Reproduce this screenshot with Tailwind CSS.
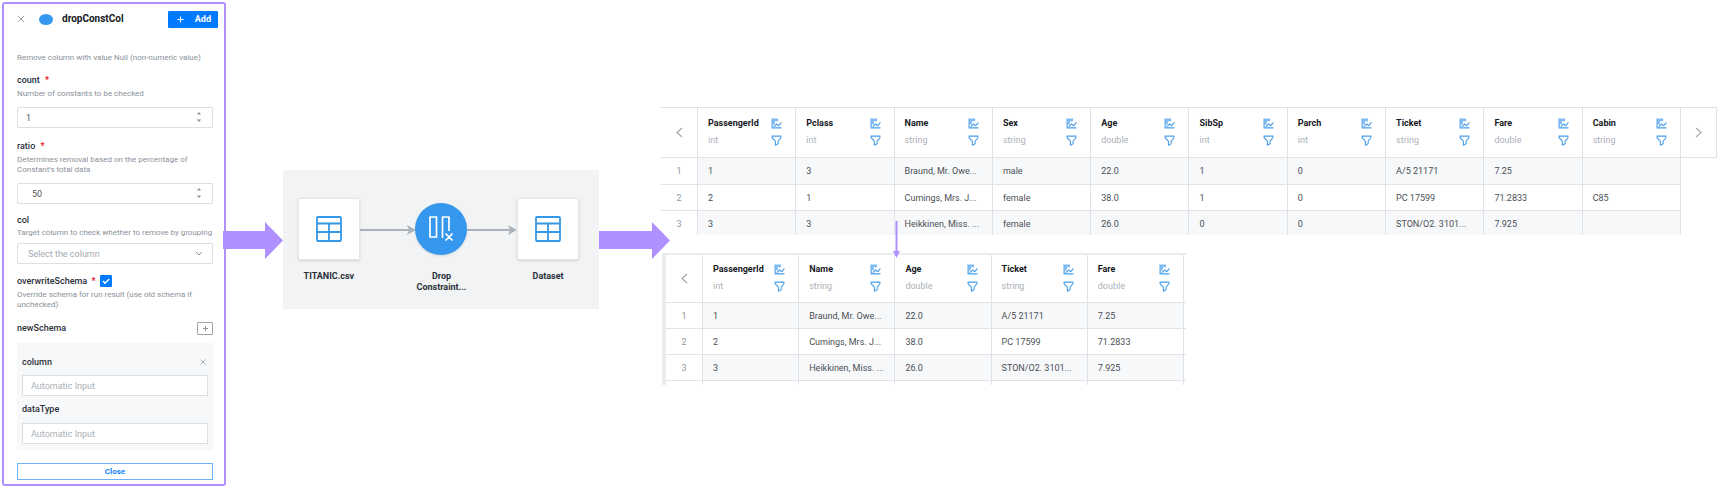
<!DOCTYPE html>
<html lang="en">
<head>
<meta charset="utf-8">
<title>dropConstCol</title>
<script src="https://cdn.jsdelivr.net/npm/@tailwindcss/browser@4"></script>
</head>
<body class="bg-white font-['Roboto',sans-serif] text-[#2b3038]">
<svg class="hidden" aria-hidden="true">
  <symbol id="chart" viewBox="0 0 20 20"><path d="M2 1v17h17" fill="none" stroke="currentColor" stroke-width="2"/><path d="M3 1h4v11H3zM7 1h6v5H7z" fill="currentColor" opacity=".7"/><path d="M5 16l5-5 4 3 5-6" fill="none" stroke="currentColor" stroke-width="2"/></symbol>
  <symbol id="filter" viewBox="0 0 20 20"><path d="M2 2h16v3l-5 6v5l-5 2.500v-7.500l-6-6z" fill="none" stroke="currentColor" stroke-width="2" stroke-linejoin="round"/></symbol>
  <symbol id="sheet" viewBox="0 0 26 26"><path d="M2 1h22q1 0 1 1v22q0 1-1 1H2q-1 0-1-1V2q0-1 1-1zM1 7.500h24M1 16h24M13 7.500V25" fill="none" stroke="currentColor" stroke-width="1.800"/></symbol>
  <symbol id="cross" viewBox="0 0 10 10"><path d="M1 1l8 8M9 1l-8 8" fill="none" stroke="currentColor" stroke-width="1.200"/></symbol>
  <symbol id="spin" viewBox="0 0 6 12"><path d="M.8 3.500L3 1l2.200 2.500zM.8 8.500L3 11l2.200-2.500z" fill="currentColor"/></symbol>
</svg>
<main class="flex items-start">
  <aside class="mt-[2px] ml-[2px] w-56 shrink-0 rounded-[3px] border-2 border-[#b08fff] pr-[11px] pb-1 pl-[13px] text-[8px] leading-[10px] text-[#8a929b]">
    <header class="-mr-[5px] flex h-[30px] items-center">
      <button aria-label="Dismiss" class="mr-[14px] text-[#9aa0a6]"><svg class="size-2"><use href="#cross"/></svg></button>
      <span class="h-[11px] w-[14px] rounded-[50%] bg-[#3598ee]"></span>
      <h1 class="ml-[9px] text-[10px] font-bold text-[#16191d]">dropConstCol</h1>
      <button class="ml-auto flex h-[17px] w-[50px] items-center justify-between rounded-[1px] bg-[#007bff] px-[7px] text-[9px] font-bold text-white"><svg class="ml-[2px] size-[7px]" viewBox="0 0 7 7"><path d="M3.500 0.500v6M.5 3.500h6" stroke="white"/></svg>Add</button>
    </header>
    <p class="mt-[19px]">Remove column with value Null (non-numeric value)</p>
    <label for="count" class="mt-[11px] block text-[9px] leading-3 font-medium text-[#2b3038]">count <span class="ml-[3px] text-red-600">*</span></label>
    <p class="mt-[3px]">Number of constants to be checked</p>
    <div class="relative mt-[8px]">
      <input id="count" type="number" value="1" class="block h-[21px] w-full rounded-[1px] border border-[#dcdfe3] px-2 text-[9px] text-[#50565d] [appearance:textfield]">
      <svg class="pointer-events-none absolute top-1 right-[11px] h-3 w-[6px]"><use href="#spin"/></svg>
    </div>
    <label for="ratio" class="mt-[12px] block text-[9px] leading-3 font-medium text-[#2b3038]">ratio <span class="ml-[3px] text-red-600">*</span></label>
    <p class="mt-[3px]">Determines removal based on the percentage of<br>Constant's total data</p>
    <div class="relative mt-[8px]">
      <input id="ratio" type="number" value="50" class="block h-[21px] w-full rounded-[1px] border border-[#dcdfe3] px-[14px] text-[9px] text-[#50565d] [appearance:textfield]">
      <svg class="pointer-events-none absolute top-1 right-[11px] h-3 w-[6px]"><use href="#spin"/></svg>
    </div>
    <label for="col" class="mt-[10px] block text-[9px] leading-3 font-medium text-[#2b3038]">col</label>
    <p class="mt-[2px] whitespace-nowrap">Target column to check whether to remove by grouping</p>
    <div class="relative mt-[5px]">
      <select id="col" class="block h-[21px] w-full appearance-none rounded-[1px] border border-[#dcdfe3] px-[10px] text-[9px] text-[#a4abb3]"><option>Select the column</option></select>
      <svg class="pointer-events-none absolute top-2 right-[10px] h-[5px] w-2" viewBox="0 0 8 5"><path d="M1 1l3 3 3-3" fill="none" stroke="currentColor"/></svg>
    </div>
    <div class="mt-[11px] flex h-3 items-center">
      <label for="over" class="text-[9px] font-medium text-[#2b3038]">overwriteSchema <span class="ml-[2px] text-red-600">*</span></label>
      <span class="relative ml-[5px] size-3"><input id="over" type="checkbox" checked class="block size-3 appearance-none rounded-[1px] bg-[#007bff]"><svg class="pointer-events-none absolute inset-0 size-3" viewBox="0 0 12 12"><path d="M3 6l2 2.200L9.200 4" fill="none" stroke="white" stroke-width="1.500"/></svg></span>
    </div>
    <p class="mt-[3px]">Override schema for run result (use old schema if<br>unchecked)</p>
    <div class="mt-[11px] flex h-[14px] items-center justify-between">
      <h2 class="text-[9px] font-medium text-[#2b3038]">newSchema</h2>
      <button aria-label="Add schema" class="flex h-[13px] w-4 items-center justify-center rounded-[1px] border border-[#a0a4a9]"><svg class="size-[5px]" viewBox="0 0 5 5"><path d="M2.500 0v5M0 2.500h5" stroke="currentColor"/></svg></button>
    </div>
    <section class="mt-2 bg-[#f7f8fa] px-[5px] pt-[13px] pb-[6px]">
      <div class="flex h-3 items-center justify-between"><label for="column" class="text-[9px] font-medium text-[#2b3038]">column</label><button aria-label="Remove schema" class="mr-[2px]"><svg class="size-[6px]"><use href="#cross"/></svg></button></div>
      <input id="column" placeholder="Automatic Input" class="mt-[7px] block h-[21px] w-full border border-[#dcdfe3] bg-white px-2 text-[9px] placeholder:text-[#a9b0b8]">
      <label for="dtype" class="mt-[7px] block text-[9px] leading-3 font-medium text-[#2b3038]">dataType</label>
      <input id="dtype" placeholder="Automatic Input" class="mt-2 block h-[21px] w-full border border-[#dcdfe3] bg-white px-2 text-[9px] placeholder:text-[#a9b0b8]">
    </section>
    <button class="mt-[13px] flex h-[17px] w-full items-center justify-center border border-[#6cb2fb] font-bold text-[#1583fb]">Close</button>
  </aside>

  <svg class="relative mt-[222px] -ml-[3px] h-[37px] w-[60px] shrink-0" viewBox="0 0 60 37" fill="#b08fff"><path d="M0 9h42V0l18 18.500L42 37V27H0z"/></svg>

  <section class="mt-[170px] flex h-[139px] w-[316px] shrink-0 items-start bg-[#f1f3f5] pt-7 pr-[20px] pl-[15px] text-center text-[9px] leading-[11px] font-bold">
    <div class="w-[62px]">
      <div class="flex h-[62px] items-center justify-center border border-[#e3e5e8] bg-white text-[#3598e6] shadow-sm"><svg class="size-[26px]"><use href="#sheet"/></svg></div>
      <p class="mt-[11px]">TITANIC.csv</p>
    </div>
    <svg class="mt-[27px] h-[10px] w-14 text-[#a9b2bb]" viewBox="0 0 56 10"><path d="M0 5h50" stroke="currentColor" stroke-width="2"/><path d="M47 0l9 5-9 5 2.500-5z" fill="currentColor"/></svg>
    <div class="w-[52px]">
      <div class="mt-[5px] flex size-[52px] items-center justify-center rounded-full bg-[#3598ee] shadow-sm"><svg class="size-[26px]" viewBox="0 0 26 26" fill="none" stroke="white" stroke-width="1.700" stroke-linejoin="round"><path d="M2 1h6.500v20H2zM14.500 22V1H21v14M17.500 17.500l7 7M24.500 17.500l-7 7"/></svg></div>
      <p class="mt-[16px]">Drop<br>Constraint...</p>
    </div>
    <svg class="mt-[27px] h-[10px] w-[50px] text-[#a9b2bb]" viewBox="6 0 50 10"><path d="M6 5h44" stroke="currentColor" stroke-width="2"/><path d="M47 0l9 5-9 5 2.500-5z" fill="currentColor"/></svg>
    <div class="w-[62px]">
      <div class="flex h-[62px] items-center justify-center border border-[#e3e5e8] bg-white text-[#3598e6] shadow-sm"><svg class="size-[26px]"><use href="#sheet"/></svg></div>
      <p class="mt-[11px]">Dataset</p>
    </div>
  </section>

  <svg class="relative z-10 mt-[222px] -mr-[9px] h-[37px] w-[71px] shrink-0" viewBox="0 0 71 37" fill="#b08fff"><path d="M0 9h53V0l18 18.500L53 37V27H0z"/></svg>

  <div class="relative mt-[107px] mr-[2px] min-w-0 flex-1">
    <table id="before" class="w-full table-fixed border-separate border-spacing-0 border-t border-[#dfe2e6] text-left text-[9px] leading-3 text-[#4a4f55]"></table>
    <table id="after" class="mt-[18px] ml-[1px] w-[524px] table-fixed border-separate border-spacing-0 border-t-2 border-l-4 border-[#eaecef] text-left text-[9px] leading-3 text-[#4a4f55]"></table>
    <svg class="absolute top-[114px] left-[232px] h-[37px] w-[7px]" viewBox="0 0 7 37" fill="#b08fff"><path d="M2.500 0h2v30H7L3.500 37 0 30h2.500z"/></svg>
  </div>
</main>
<script>
const names = ['PassengerId','Pclass','Name','Sex','Age','SibSp','Parch','Ticket','Fare','Cabin'];
const types = ['int','int','string','string','double','int','int','string','double','string'];
const rows = [
  ['1','3','Braund, Mr. Owe...','male','22.0','1','0','A/5 21171','7.25',''],
  ['2','1','Cumings, Mrs. J...','female','38.0','1','0','PC 17599','71.2833','C85'],
  ['3','3','Heikkinen, Miss. ...','female','26.0','0','0','STON/O2. 3101...','7.925','']
];
const chevron = (d, label) => `<button aria-label="${label}" class="flex w-full justify-center"><svg class="h-[11px] w-[7px]" viewBox="0 0 7 11"><path d="${d}" fill="none" stroke="#a3a8ad" stroke-width="1.200"/></svg></button>`;
const head = i => `<th class="border-b border-l border-[#dfe2e6] pt-0 pr-[13px] pb-[2px] pl-[10px]"><div class="flex justify-between"><div><div class="font-bold text-[#16191d]">${names[i]}</div><div class="mt-[5px] font-normal text-[#abb1b8]">${types[i]}</div></div><div class="flex flex-col items-center gap-[6px] pt-px text-[#4a9fec]"><button aria-label="Chart ${names[i]}"><svg class="block size-[11px]"><use href="#chart"/></svg></button><button aria-label="Filter ${names[i]}"><svg class="block size-[11px]"><use href="#filter"/></svg></button></div></div></th>`;
const prev = '<th class="border-b border-[#dfe2e6] p-0">' + chevron('M6 1L1 5.500l5 4.500', 'Previous columns') + '</th>';
function body(cols, heights, end, whole) {
  return rows.map((r, n) => {
    const line = n < 2 || whole ? 'border-b pt-0' : 'pt-[2px]';
    const fill = n % 2 ? '' : 'bg-[#f7f8fa]';
    return `<tr class="${heights[n]}"><td class="${line} border-[#dfe2e6] px-0 pb-0 text-center text-[#9298a0]">${r[0]}</td>` +
      cols.map(i => `<td class="${line} ${fill} border-l border-[#dfe2e6] pr-0 pb-0 pl-[10px] whitespace-nowrap">${r[i]}</td>`).join('') + end + '</tr>';
  }).join('');
}
const all = names.map((_, i) => i), kept = [0, 2, 4, 7, 8];
document.getElementById('before').innerHTML =
  '<colgroup><col class="w-9">' + '<col>'.repeat(10) + '<col class="w-[37px]"></colgroup><thead><tr class="h-[50px]">' + prev + all.map(head).join('') +
  '<th class="border-x border-b border-[#dfe2e6] p-0">' + chevron('M1 1l5 4.500L1 10', 'Next columns') + '</th></tr></thead><tbody>' +
  body(all, ['h-[27px]', 'h-[26px]', 'h-6'], '<td class="border-l border-[#dfe2e6] p-0"></td>', false) + '</tbody>';
document.getElementById('after').innerHTML =
  '<colgroup><col class="w-9">' + '<col>'.repeat(5) + '<col class="w-[3px]"></colgroup><thead><tr class="h-12">' + prev + kept.map(head).join('') +
  '<th class="border-b border-l border-[#dfe2e6] p-0"></th></tr></thead><tbody>' +
  body(kept, ['h-[26px]', 'h-[26px]', 'h-[26px]'], '<td class="border-b border-l border-[#dfe2e6] p-0"></td>', true) +
  '<tr class="h-1"><td class="p-0"></td>' + '<td class="border-l border-[#dfe2e6] p-0"></td>'.repeat(6) + '</tr></tbody>';
</script>
</body>
</html>
